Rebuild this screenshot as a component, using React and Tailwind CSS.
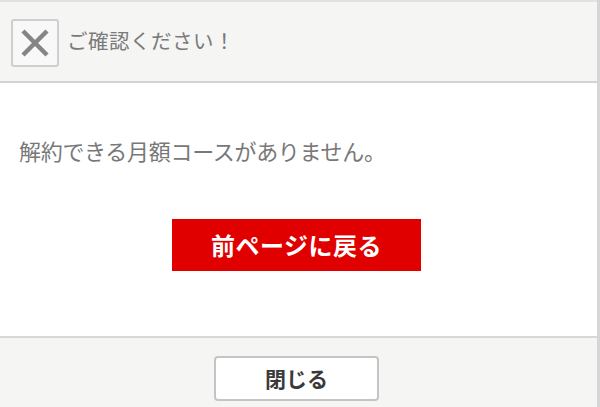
export default function App() {
  const font = { fontFamily: '"Noto Sans CJK JP", "Noto Sans", sans-serif' };
  return (
    <div className="w-[600px] h-[407px] bg-white border-r-[3px] border-[#d6d6d6] overflow-hidden flex flex-col" style={font}>
      <div className="h-[83px] shrink-0 bg-[#f5f5f3] border-t-2 border-b-2 border-t-[#e2e2e2] border-b-[#d3d3d3] flex items-center pl-[11px]">
        <div className="w-[48px] h-[48px] bg-[#f8f8f8] border-2 border-[#cfcfcf] rounded-[3px] flex items-center justify-center mt-[2px]">
          <svg width="30" height="30" viewBox="0 0 30 30">
            <path d="M3 3 L27 27 M27 3 L3 27" stroke="#858585" strokeWidth="4.5" strokeLinecap="butt" />
          </svg>
        </div>
        <div className="ml-[8px] text-[20.5px] leading-[28px] text-[#7a7a7a] tracking-[0.5px] mb-[4px]">ご確認ください！</div>
      </div>
      <div className="h-[253px] shrink-0 flex flex-col pt-[52px]">
        <div className="pl-[19px] text-[22px] leading-[30px] text-[#787878] tracking-[-0.3px]">解約できる月額コースがありません。</div>
        <div className="flex justify-center mt-[54px]">
          <div className="w-[249px] h-[52px] bg-[#e00000] ml-[-4px] flex items-center justify-center text-white font-bold text-[24px] tracking-[0.5px]">前ページに戻る</div>
        </div>
      </div>
      <div className="flex-1 bg-[#f5f5f3] border-t-2 border-[#d8d8d8] flex justify-center pt-[18px]">
        <div className="w-[165px] h-[45px] bg-white border-2 border-[#c4c4c4] rounded-[4px] flex items-center justify-center text-[21px] font-semibold text-[#3a3a3a] ml-[-4px]">閉じる</div>
      </div>
    </div>
  );
}
